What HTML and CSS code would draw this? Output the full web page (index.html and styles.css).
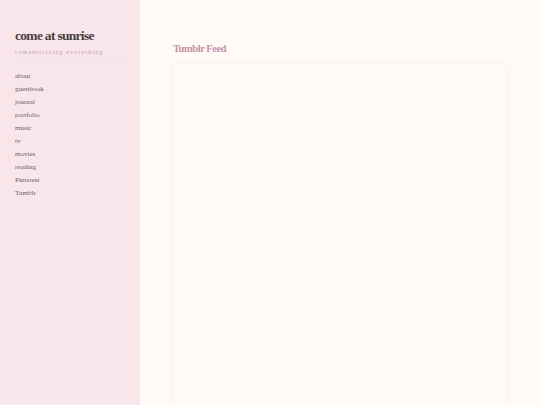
FILE: index.html
```html
<!DOCTYPE html>
<html>
<head>
<meta charset="utf-8">
<link rel="stylesheet" href="styles.css">
</head>
<body>
<div class="layout">
  <aside class="sidebar">
    <h1 class="site-title">come at sunrise</h1>
    <p class="tagline">romanticizing everything</p>
    <hr class="divider">
    <nav class="nav">
      <a>about</a>
      <a>guestbook</a>
      <a>journal</a>
      <a>portfolio</a>
      <a>music</a>
      <a>tv</a>
      <a>movies</a>
      <a>reading</a>
      <a>Pinterest</a>
      <a>Tumblr</a>
    </nav>
  </aside>
  <main class="main">
    <h2 class="page-title">Tumblr Feed</h2>
    <div class="card"></div>
  </main>
</div>
</body>
</html>
```
FILE: styles.css
```css
html, body { margin: 0; padding: 0; height: 100%; }
body { background: #fffaf5; font-family: "Liberation Serif", "DejaVu Serif", serif; overflow: hidden; }
.layout { display: flex; height: 405px; }
.sidebar { width: 140px; flex: none; background: #f9e6ea; padding: 28px 14px 0 15px; box-sizing: border-box; }
.site-title { margin: 0; font-size: 13.5px; font-weight: bold; color: #4a3c42; letter-spacing: -0.7px; line-height: 16px; }
.tagline { margin: 3px 0 0; font-size: 6.3px; letter-spacing: 1.05px; color: #b9a1aa; line-height: 9px; }
.divider { border: none; border-top: 1px solid #f3dfe4; margin: 5px 0 0; }
.nav { display: flex; flex-direction: column; margin-top: 8px; }
.nav a { font-size: 7px; color: #6e5a62; line-height: 13px; }
.main { flex: 1; padding: 42px 34px 0 33px; display: flex; flex-direction: column; }
.page-title { margin: 0; font-size: 10.5px; font-weight: bold; color: #c690a6; letter-spacing: -0.45px; line-height: 14px; }
.card { margin-top: 8px; flex: 1; background: #fffaf5; border-radius: 3px; box-shadow: 0 0 0 1px #fdf3f2, 0 0 3px 1px #fcf1f1; }
```
